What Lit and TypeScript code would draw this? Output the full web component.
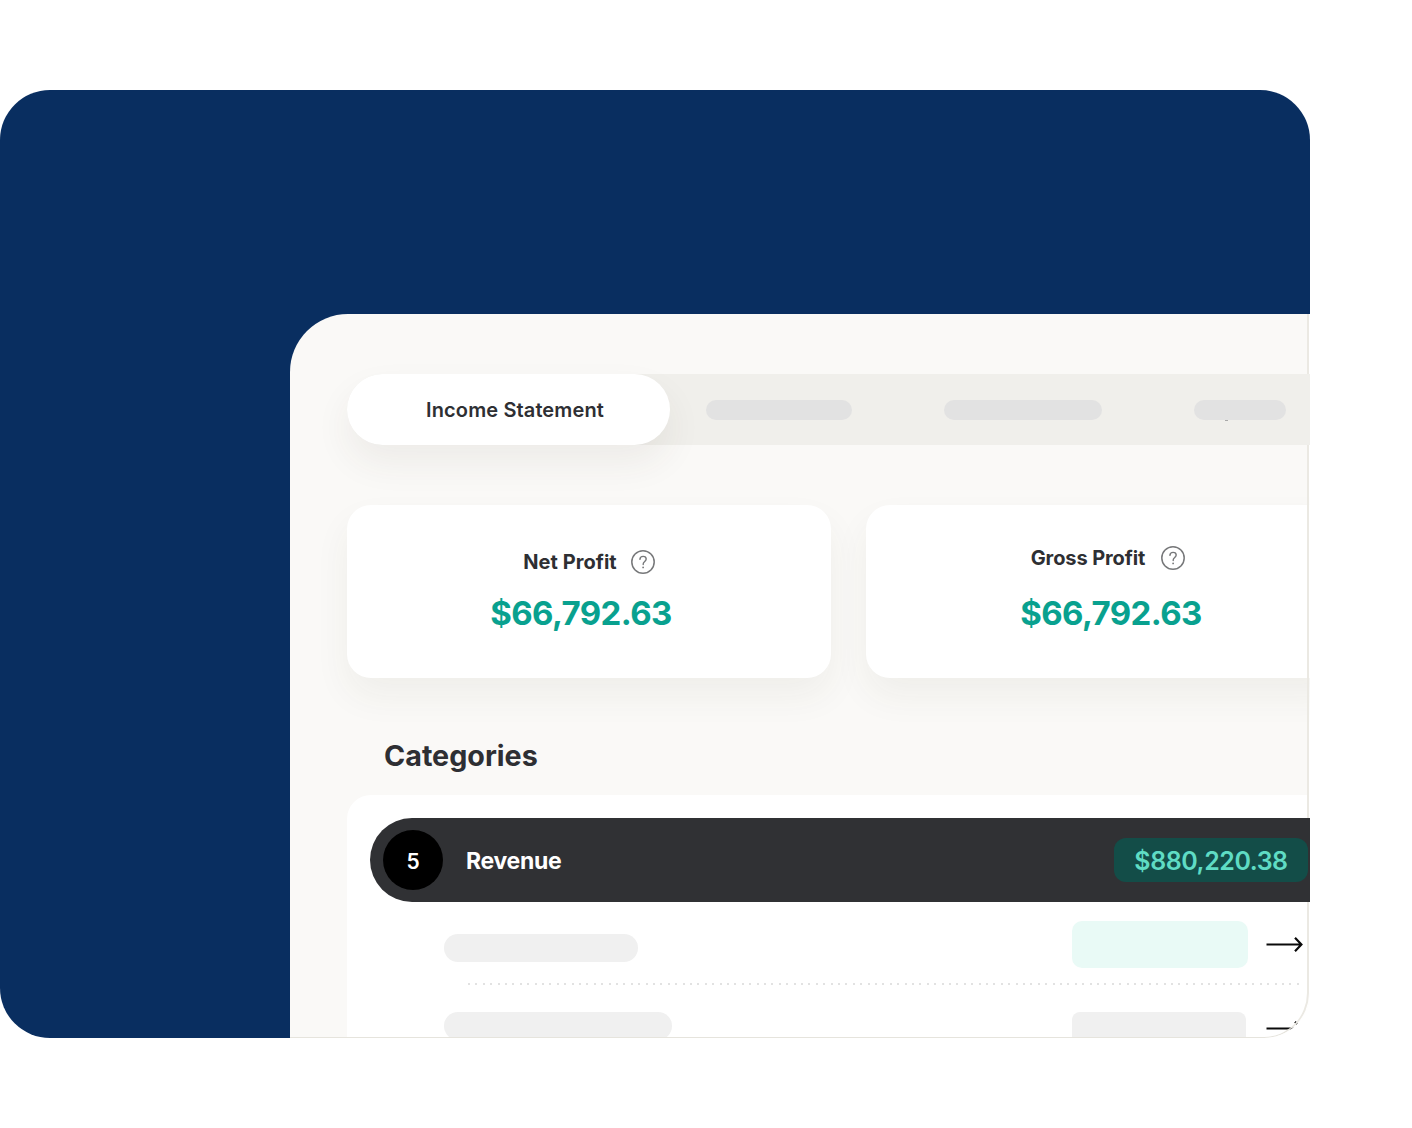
import { LitElement, html, css, svg } from "lit";
import { customElement } from "lit/decorators.js";

const help = html`<svg class="help" width="24" height="24" viewBox="0 0 24 24" fill="none">
  <circle cx="12" cy="12" r="11.2" stroke="#77787a" stroke-width="1.5"/>
  <path d="M8.9 9.4c.1-1.9 1.4-3 3.2-3 1.8 0 3.1 1.1 3.1 2.7 0 2.3-3 2.5-3 4.9v.6" stroke="#77787a" stroke-width="1.4" stroke-linecap="round"/>
  <circle cx="12.1" cy="17.4" r=".9" fill="#77787a"/>
</svg>`;

const arrow = html`<svg class="arrow" width="38" height="16" viewBox="0 0 38 16" fill="none">
  ${svg`<path d="M0.5 8.5H35M29 1.8L35.4 8.5L29 15.2" stroke="#0a0a0a" stroke-width="2.2"/>`}
</svg>`;

@customElement("app-root")
export class AppRoot extends LitElement {
  static styles = css`
    :host {
      display: block;
      width: 1412px;
      height: 1128px;
      padding-top: 90px;
      box-sizing: border-box;
      background: #fff;
      font-family: Inter, "Liberation Sans", sans-serif;
      color: #2e2f33;
    }
    .blue {
      width: 1310px;
      height: 948px;
      box-sizing: border-box;
      padding: 224px 0 0 290px;
      background: #092e60;
      border-radius: 50px;
    }
    .window {
      position: relative;
      width: 1020px;
      height: 724px;
      overflow: hidden;
      box-sizing: border-box;
      background: linear-gradient(to left, #fff 1px, #faf9f7 1px);
      border-radius: 58px 0 46px 0;
      padding-top: 60px;
    }
    .window::after {
      content: "";
      position: absolute;
      inset: 0 1px 0 0;
      box-sizing: border-box;
      border-right: 2px solid #ebe9e3;
      border-bottom: 1px solid #e6e4dd;
      border-bottom-right-radius: 45px;
      z-index: 1;
      pointer-events: none;
    }
    .strip {
      position: relative;
      z-index: 2;
      display: flex;
      align-items: center;
      height: 71px;
      margin-left: 57px;
      background: #f0efeb;
      border-radius: 36px 0 0 36px;
    }
    .tab {
      display: flex;
      align-items: center;
      justify-content: center;
      box-sizing: border-box;
      width: 323px;
      height: 71px;
      padding-left: 13px;
      border-radius: 36px;
      background: #fff;
      box-shadow: 0 18px 36px rgba(70, 60, 40, 0.07);
      font-size: 20px;
      font-weight: 600;
      letter-spacing: 0.12px;
    }
    .ghost {
      height: 20px;
      border-radius: 10px;
      background: #e2e2e2;
    }
    .g1 { width: 146px; margin-left: 36px; }
    .g2 { width: 158px; margin-left: 92px; }
    .g3 { width: 92px; margin-left: 92px; position: relative; }
    .g3::after {
      content: "";
      position: absolute;
      left: 31px;
      top: 20px;
      width: 3px;
      height: 1px;
      background: #a9a9a9;
    }
    .cards {
      display: flex;
      gap: 35px;
      margin: 60px 0 0 57px;
    }
    .card {
      flex: none;
      box-sizing: border-box;
      width: 484px;
      height: 173px;
      background: #fff;
      border-radius: 24px;
      box-shadow: 0 18px 36px rgba(70, 60, 40, 0.06);
      display: flex;
      flex-direction: column;
      align-items: center;
    }
    .card.second { width: 480px; }
    .label {
      display: flex;
      align-items: center;
      gap: 14px;
      font-size: 20px;
      font-weight: 700;
      letter-spacing: 0.05px;
      line-height: 24px;
      margin-top: 45px;
    }
    .second .label {
      margin-top: 41px;
      gap: 16px;
      margin-left: 4px;
      letter-spacing: -0.1px;
    }
    .value {
      font-size: 33px;
      font-weight: 700;
      letter-spacing: -0.6px;
      line-height: 42px;
      color: #09a18f;
      margin-top: 18px;
      margin-left: -16px;
    }
    .second .value { margin-top: 22px; margin-left: 10px; }
    h2 {
      margin: 58px 0 0 94px;
      font-size: 28.7px;
      font-weight: 700;
      line-height: 40px;
    }
    .panel {
      margin: 19px 0 0 57px;
      height: 243px;
      box-sizing: border-box;
      padding: 23px 0 0 23px;
      background: #fff;
      border-radius: 24px 0 0 0;
    }
    .bar {
      position: relative;
      z-index: 2;
      display: flex;
      align-items: center;
      height: 84px;
      padding-left: 13px;
      background: #303134;
      border-radius: 42px 0 0 42px;
      color: #fff;
    }
    .num {
      display: flex;
      align-items: center;
      justify-content: center;
      width: 60px;
      height: 60px;
      border-radius: 50%;
      background: #000;
      font-size: 21px;
      font-weight: 600;
      padding-top: 2px;
      box-sizing: border-box;
    }
    .name {
      margin-left: 23px;
      padding-top: 2px;
      font-size: 23px;
      font-weight: 700;
      letter-spacing: -0.3px;
    }
    .amount {
      display: flex;
      align-items: center;
      justify-content: center;
      margin-left: auto;
      margin-right: 2px;
      width: 194px;
      height: 44px;
      box-sizing: border-box;
      padding-top: 2px;
      border-radius: 12px;
      background: #134d48;
      color: #5fdcc4;
      font-size: 25px;
      font-weight: 600;
      letter-spacing: -0.45px;
    }
    .row {
      position: relative;
      height: 83px;
      box-sizing: border-box;
      display: flex;
      align-items: flex-start;
      padding-left: 74px;
    }
    .row.first::after {
      content: "";
      position: absolute;
      left: 98px;
      right: 8px;
      bottom: 0;
      height: 2px;
      background: repeating-linear-gradient(to right, #e2e2e2 0 2px, transparent 2px 7.4px);
    }
    .skel {
      height: 28px;
      border-radius: 14px;
      background: #f0f0f0;
      margin-top: 32px;
    }
    .first .skel { width: 194px; }
    .box {
      flex: none;
      width: 176px;
      height: 47px;
      margin-top: 19px;
      border-radius: 10px;
      background: #e9faf6;
      position: absolute;
      left: 702px;
    }
    .arrow {
      position: absolute;
      left: 896px;
      top: 34px;
    }
    .second-row .skel { width: 228px; margin-top: 27px; }
    .second-row .box {
      width: 174px;
      margin-top: 27px;
      background: #f0f0f0;
      border-radius: 8px;
    }
    .second-row .arrow { top: 35px; }
  `;

  render() {
    return html`
      <div class="blue">
        <div class="window">
          <div class="strip">
            <div class="tab">Income Statement</div>
            <div class="ghost g1"></div>
            <div class="ghost g2"></div>
            <div class="ghost g3"></div>
          </div>
          <div class="cards">
            <div class="card">
              <div class="label">Net Profit ${help}</div>
              <div class="value">$66,792.63</div>
            </div>
            <div class="card second">
              <div class="label">Gross Profit ${help}</div>
              <div class="value">$66,792.63</div>
            </div>
          </div>
          <h2>Categories</h2>
          <div class="panel">
            <div class="bar">
              <div class="num">5</div>
              <div class="name">Revenue</div>
              <div class="amount">$880,220.38</div>
            </div>
            <div class="row first">
              <div class="skel"></div>
              <div class="box"></div>
              ${arrow}
            </div>
            <div class="row second-row">
              <div class="skel"></div>
              <div class="box"></div>
              ${arrow}
            </div>
          </div>
        </div>
      </div>
    `;
  }
}
